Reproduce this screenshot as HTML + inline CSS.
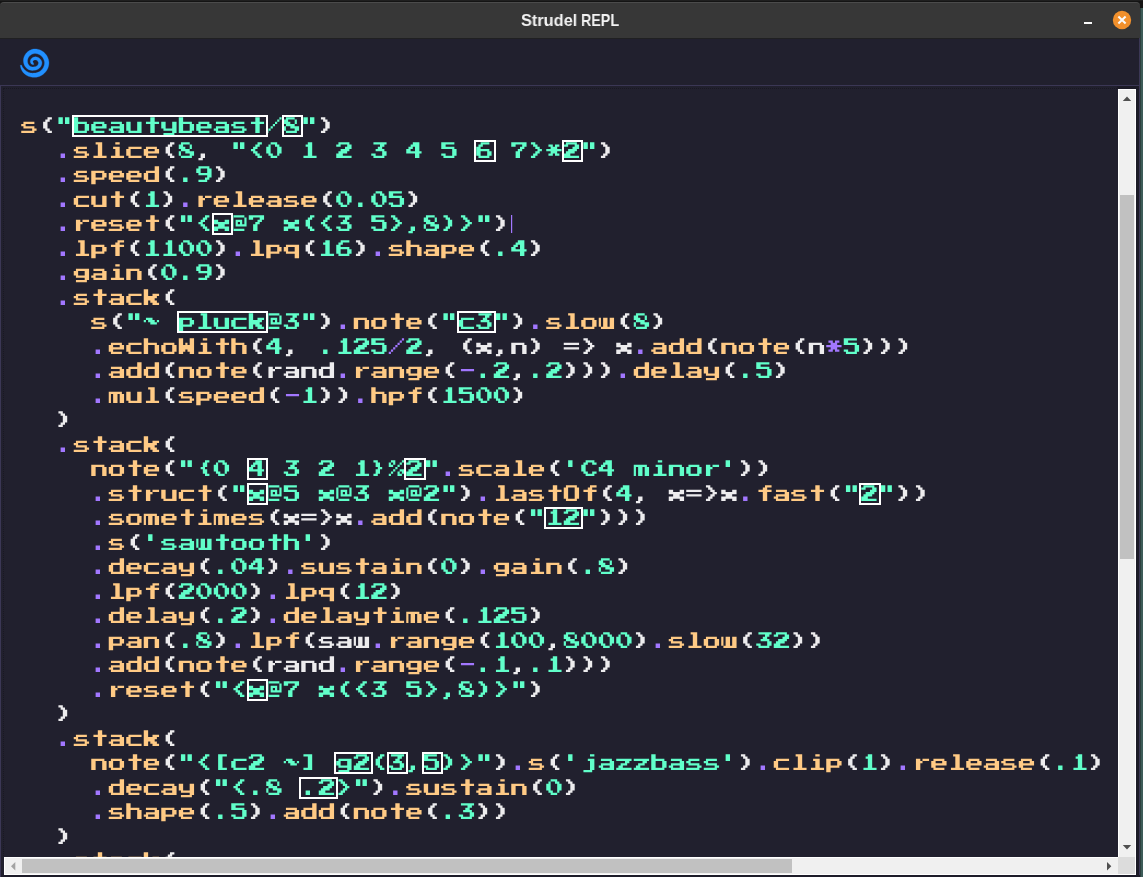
<!DOCTYPE html>
<html><head><meta charset="utf-8">
<style>
html,body{margin:0;padding:0;}
body{width:1143px;height:877px;overflow:hidden;position:relative;background:#141414;}
.abs{position:absolute;}
#desk{left:1140px;top:8px;width:3px;height:869px;background:#3d5c58;border-left:1px solid #2c403d;box-sizing:border-box;}
#title{left:0;top:2px;width:1140px;height:36px;background:#373737;border-radius:4px 4px 0 0;box-sizing:border-box;border-top:1px solid #4b4b4b;}
#top0{left:0;top:0;width:1143px;height:1px;background:#1f1f1f;}
.tt{position:absolute;will-change:transform;top:11px;color:#f2f2f2;font:bold 17px "Liberation Sans",sans-serif;transform-origin:0 0;white-space:nowrap;}
#minb{left:1084px;top:22px;width:8px;height:2px;background:#fafafa;}
#closeb{left:1113px;top:11px;width:18px;height:18px;border-radius:50%;background:#f1902c;}
#header{left:0;top:38px;width:1140px;height:47px;background:#21202e;}
#hline{left:0;top:85px;width:1140px;height:1px;background:#3b3755;}
#editor{left:0;top:86px;width:1140px;height:791px;background:#21202e;}
#lborder{left:0;top:86px;width:1px;height:791px;background:#3b3755;}
#rdark{left:1136px;top:86px;width:3px;height:791px;background:#1c1b27;}
#topdark{left:1117px;top:86px;width:22px;height:3px;background:#1c1b27;}
#focus{left:3px;top:88px;width:1114px;height:768px;box-sizing:border-box;border-top:1px dotted #191822;border-left:1px dotted #191822;}
#rborder{left:1139px;top:38px;width:1px;height:839px;background:#3b3755;}
#bdark{left:1px;top:875px;width:1139px;height:2px;background:#1d1c29;}
#vs{left:1118px;top:89px;width:18px;height:768px;background:#f0f0f0;box-sizing:border-box;border-left:1px solid #fff;border-right:1px solid #fff;border-top:1px solid #fff;}
#vthumb{left:1120px;top:195px;width:14px;height:364px;background:#c1c1c1;}
#hs{left:4px;top:857px;width:1114px;height:18px;background:#f0f0f0;box-sizing:border-box;border-top:1px solid #fff;border-bottom:1px solid #fff;border-left:1px solid #fff;}
#hthumb{left:22px;top:859px;width:770px;height:14px;background:#c1c1c1;}
#corner{left:1118px;top:857px;width:18px;height:18px;background:#dcdcdc;box-sizing:border-box;border-right:1px solid #fff;border-bottom:1px solid #fff;}
#code{left:0;top:0;}
.ln{position:absolute;left:21.25px;white-space:pre;font-family:"Liberation Mono",monospace;font-weight:bold;font-size:23px;line-height:17.5px;height:17.5px;color:#edecee;transform:scaleX(1.268);transform-origin:0 0;}
.f{color:#ffca85}.s{color:#61ffca}.o{color:#a277ff}.w{color:#edecee}
.bxd{box-sizing:border-box;border:2px solid #f4f4f4;}
</style></head><body>
<div class="abs" id="top0"></div>
<div class="abs" id="desk"></div>
<div class="abs" id="title"></div>
<div class="tt" style="left:521.3px;transform:scaleX(0.96)">Strudel</div><div class="tt" style="left:580.5px;transform:scaleX(0.84)">REPL</div>
<div class="abs" id="minb"></div>
<svg class="abs" style="left:0;top:0" width="1143" height="40"><circle cx="1122" cy="20" r="9.2" fill="#f1902c"/><path d="M1118.4 16.6 L1125.6 23.4 M1125.6 16.6 L1118.4 23.4" stroke="#fafafa" stroke-width="2.1" stroke-linecap="butt"/></svg>
<div class="abs" id="header"></div>
<div class="abs" id="hline"></div>
<div class="abs" style="left:0;top:38px;width:1140px;height:1px;background:#202022"></div>
<svg class="abs" style="left:0;top:0" width="80" height="86"><path fill="#2190ff" stroke="#2190ff" stroke-width="0.3" stroke-linejoin="round" d="M20.31 65.29 L20.44 66.27 L20.64 67.25 L20.91 68.21 L21.25 69.16 L21.66 70.09 L22.13 71.00 L22.68 71.87 L23.36 72.69 L24.09 73.42 L24.87 74.09 L25.69 74.71 L26.56 75.27 L27.46 75.76 L28.40 76.20 L29.36 76.56 L30.35 76.86 L31.35 77.09 L32.37 77.24 L33.40 77.33 L34.31 77.35 L35.33 77.30 L36.36 77.18 L37.37 76.99 L38.37 76.73 L39.35 76.40 L40.30 76.01 L41.22 75.54 L42.11 75.02 L42.96 74.43 L43.77 73.78 L44.53 73.08 L45.24 72.33 L45.90 71.53 L46.50 70.69 L47.04 69.80 L47.52 68.88 L47.93 67.93 L48.27 66.95 L48.55 65.95 L48.75 64.93 L48.88 63.90 L48.95 62.86 L48.87 61.66 L48.71 60.63 L48.48 59.62 L48.18 58.64 L47.82 57.68 L47.39 56.75 L46.89 55.86 L46.34 55.01 L45.74 54.21 L45.08 53.45 L44.37 52.74 L43.61 52.08 L42.82 51.49 L41.99 50.95 L41.13 50.47 L40.24 50.06 L39.32 49.71 L38.39 49.43 L37.44 49.21 L36.49 49.07 L35.53 48.99 L34.57 48.97 L33.43 49.08 L32.50 49.29 L31.60 49.58 L30.72 49.92 L29.89 50.32 L29.09 50.77 L28.34 51.28 L27.63 51.83 L26.97 52.43 L26.36 53.06 L25.80 53.73 L25.31 54.43 L24.86 55.15 L24.48 55.90 L24.15 56.67 L23.89 57.44 L23.68 58.23 L23.53 59.01 L23.44 59.80 L23.41 60.58 L23.44 61.36 L23.52 62.11 L23.66 62.86 L23.81 63.52 L24.03 64.22 L24.29 64.89 L24.59 65.54 L24.94 66.15 L25.33 66.73 L25.75 67.28 L26.20 67.78 L26.69 68.25 L27.20 68.67 L27.73 69.05 L28.29 69.38 L28.86 69.67 L29.44 69.92 L30.03 70.12 L30.62 70.27 L31.22 70.37 L31.81 70.43 L32.40 70.45 L32.98 70.42 L33.54 70.36 L34.10 70.25 L34.14 70.20 L34.67 70.19 L35.20 70.14 L35.72 70.06 L36.24 69.94 L36.75 69.78 L37.25 69.58 L37.74 69.35 L38.21 69.09 L38.66 68.80 L39.09 68.47 L39.50 68.11 L39.88 67.73 L40.23 67.32 L40.56 66.88 L40.85 66.42 L41.11 65.94 L41.34 65.45 L41.54 64.94 L41.69 64.41 L41.82 63.88 L41.90 63.33 L41.94 62.78 L41.79 61.81 L41.61 61.28 L41.40 60.77 L41.15 60.29 L40.86 59.83 L40.55 59.40 L40.22 59.00 L39.85 58.63 L39.47 58.29 L39.07 57.99 L38.65 57.72 L38.23 57.49 L37.79 57.29 L37.34 57.13 L36.89 57.00 L36.44 56.91 L35.99 56.86 L35.54 56.84 L35.10 56.85 L34.67 56.90 L34.25 56.98 L33.84 57.09 L33.53 57.19 L33.16 57.33 L32.81 57.50 L32.47 57.69 L32.15 57.90 L31.86 58.14 L31.59 58.39 L31.34 58.66 L31.12 58.94 L30.92 59.23 L30.75 59.53 L30.61 59.84 L30.49 60.15 L30.40 60.47 L30.33 60.79 L30.30 61.11 L30.28 61.42 L30.30 61.73 L30.34 62.03 L30.40 62.32 L30.48 62.60 L30.59 62.87 L30.71 63.12 L30.81 63.29 L30.96 63.51 L31.13 63.71 L31.30 63.89 L31.49 64.05 L31.69 64.20 L31.89 64.32 L32.10 64.42 L32.32 64.51 L32.53 64.57 L32.75 64.61 L32.97 64.63 L33.18 64.62 L33.39 64.60 L33.59 64.56 L33.78 64.50 L33.96 64.43 L33.32 62.71 L33.31 62.69 L33.29 62.68 L33.27 62.66 L33.25 62.64 L33.23 62.61 L33.21 62.59 L33.19 62.56 L33.16 62.53 L33.14 62.49 L33.11 62.46 L33.09 62.41 L33.07 62.37 L33.04 62.31 L33.03 62.26 L33.01 62.20 L33.00 62.14 L32.95 62.00 L32.93 61.93 L32.92 61.85 L32.91 61.77 L32.91 61.69 L32.91 61.59 L32.92 61.50 L32.94 61.40 L32.97 61.30 L33.01 61.19 L33.05 61.08 L33.11 60.98 L33.18 60.87 L33.26 60.76 L33.34 60.66 L33.44 60.56 L33.55 60.47 L33.67 60.38 L33.81 60.29 L33.95 60.22 L34.10 60.15 L34.26 60.10 L34.43 60.05 L34.68 59.98 L34.87 59.94 L35.06 59.92 L35.26 59.91 L35.47 59.92 L35.68 59.94 L35.89 59.98 L36.11 60.04 L36.33 60.12 L36.55 60.21 L36.76 60.32 L36.98 60.46 L37.18 60.61 L37.38 60.78 L37.58 60.96 L37.76 61.17 L37.93 61.39 L38.08 61.64 L38.22 61.89 L38.35 62.16 L38.45 62.45 L38.54 62.75 L38.55 62.63 L38.52 62.95 L38.47 63.25 L38.40 63.56 L38.31 63.86 L38.20 64.15 L38.07 64.43 L37.92 64.70 L37.76 64.95 L37.57 65.20 L37.37 65.43 L37.16 65.64 L36.93 65.84 L36.69 66.03 L36.44 66.19 L36.17 66.34 L35.90 66.46 L35.62 66.57 L35.34 66.66 L35.05 66.72 L34.76 66.77 L34.46 66.80 L34.17 66.80 L33.38 66.90 L33.07 66.94 L32.76 66.96 L32.43 66.95 L32.11 66.92 L31.77 66.86 L31.44 66.78 L31.11 66.68 L30.78 66.54 L30.45 66.38 L30.14 66.19 L29.83 65.98 L29.53 65.74 L29.24 65.48 L28.97 65.18 L28.72 64.87 L28.48 64.53 L28.27 64.17 L28.08 63.80 L27.92 63.40 L27.78 62.98 L27.67 62.55 L27.58 62.05 L27.52 61.59 L27.49 61.13 L27.50 60.65 L27.54 60.17 L27.62 59.68 L27.73 59.19 L27.88 58.71 L28.07 58.23 L28.30 57.75 L28.56 57.29 L28.86 56.84 L29.20 56.41 L29.57 56.00 L29.98 55.60 L30.42 55.24 L30.89 54.90 L31.40 54.59 L31.92 54.32 L32.48 54.08 L33.06 53.87 L33.66 53.71 L34.27 53.59 L34.71 53.56 L35.35 53.57 L35.99 53.61 L36.63 53.71 L37.26 53.84 L37.89 54.03 L38.51 54.26 L39.11 54.53 L39.70 54.85 L40.27 55.21 L40.81 55.61 L41.33 56.05 L41.82 56.53 L42.28 57.05 L42.70 57.60 L43.09 58.19 L43.43 58.80 L43.74 59.44 L44.00 60.11 L44.22 60.79 L44.38 61.50 L44.50 62.22 L44.55 62.78 L44.51 63.51 L44.42 64.24 L44.27 64.96 L44.08 65.67 L43.84 66.36 L43.55 67.03 L43.22 67.68 L42.84 68.31 L42.42 68.91 L41.96 69.47 L41.46 70.01 L40.92 70.50 L40.35 70.96 L39.75 71.38 L39.13 71.75 L38.47 72.08 L37.80 72.37 L37.11 72.60 L36.40 72.79 L35.69 72.93 L34.96 73.01 L34.23 73.05 L33.38 73.11 L32.64 73.13 L31.89 73.11 L31.14 73.03 L30.39 72.90 L29.64 72.71 L28.91 72.47 L28.18 72.17 L27.47 71.82 L26.79 71.42 L26.12 70.97 L25.49 70.47 L24.90 69.95 L24.28 69.38 L23.71 68.77 L23.17 68.10 L22.67 67.39 L22.22 66.64 L21.83 65.85 L21.48 65.02Z"/></svg>
<div class="abs" id="editor"></div>
<div class="abs" id="lborder"></div>
<div class="abs" id="rdark"></div>
<div class="abs" id="topdark"></div>
<div class="abs" id="focus"></div>
<div class="abs" id="rborder"></div>
<div class="abs" id="bdark"></div>
<div class="abs" id="clip" style="left:1px;top:86px;width:1117px;height:771px;overflow:hidden;"><div class="abs" style="left:-1px;top:-86px;width:1143px;height:877px;"><svg class="abs" id="codesvg" width="1143" height="877" viewBox="0 0 1143 877"><defs><path id="g34" transform="scale(2.1875 2.25)" d="M1 0h2v1h-2zM4 0h2v1h-2zM1 1h2v1h-2zM4 1h2v1h-2zM1 2h2v1h-2zM4 2h2v1h-2z"/><path id="g37" transform="scale(2.1875 2.25)" d="M1 0h2v1h-2zM6 0h1v1h-1zM0 1h1v1h-1zM2 1h1v1h-1zM5 1h1v1h-1zM0 2h2v1h-2zM4 2h1v1h-1zM3 3h1v1h-1zM2 4h1v1h-1zM5 4h2v1h-2zM1 5h1v1h-1zM4 5h1v1h-1zM6 5h1v1h-1zM0 6h1v1h-1zM4 6h2v1h-2z"/><path id="g39" transform="scale(2.1875 2.25)" d="M2 0h2v1h-2zM2 1h2v1h-2zM2 2h2v1h-2z"/><path id="g40" transform="scale(2.1875 2.25)" d="M4 0h2v1h-2zM3 1h2v1h-2zM2 2h2v1h-2zM2 3h2v1h-2zM2 4h2v1h-2zM3 5h2v1h-2zM4 6h2v1h-2z"/><path id="g41" transform="scale(2.1875 2.25)" d="M1 0h2v1h-2zM2 1h2v1h-2zM3 2h2v1h-2zM3 3h2v1h-2zM3 4h2v1h-2zM2 5h2v1h-2zM1 6h2v1h-2z"/><path id="g42" transform="scale(2.1875 2.25)" d="M1 1h2v1h-2zM4 1h2v1h-2zM2 2h3v1h-3zM0 3h7v1h-7zM2 4h3v1h-3zM1 5h2v1h-2zM4 5h2v1h-2z"/><path id="g44" transform="scale(2.1875 2.25)" d="M2 5h2v1h-2zM2 6h2v1h-2zM1 7h2v1h-2z"/><path id="g45" transform="scale(2.1875 2.25)" d="M1 3h6v1h-6z"/><path id="g46" transform="scale(2.1875 2.25)" d="M2 5h2v1h-2zM2 6h2v1h-2z"/><path id="g47" transform="scale(2.1875 2.25)" d="M6 0h1v1h-1zM5 1h1v1h-1zM4 2h1v1h-1zM3 3h1v1h-1zM2 4h1v1h-1zM1 5h1v1h-1zM0 6h1v1h-1z"/><path id="g48" transform="scale(2.1875 2.25)" d="M2 0h3v1h-3zM1 1h1v1h-1zM4 1h2v1h-2zM0 2h2v1h-2zM5 2h2v1h-2zM0 3h2v1h-2zM5 3h2v1h-2zM0 4h2v1h-2zM5 4h2v1h-2zM1 5h2v1h-2zM5 5h1v1h-1zM2 6h3v1h-3z"/><path id="g49" transform="scale(2.1875 2.25)" d="M3 0h2v1h-2zM2 1h3v1h-3zM3 2h2v1h-2zM3 3h2v1h-2zM3 4h2v1h-2zM3 5h2v1h-2zM1 6h6v1h-6z"/><path id="g50" transform="scale(2.1875 2.25)" d="M1 0h5v1h-5zM0 1h2v1h-2zM5 1h2v1h-2zM4 2h3v1h-3zM2 3h4v1h-4zM1 4h4v1h-4zM0 5h3v1h-3zM0 6h7v1h-7z"/><path id="g51" transform="scale(2.1875 2.25)" d="M1 0h6v1h-6zM4 1h2v1h-2zM3 2h2v1h-2zM2 3h4v1h-4zM5 4h2v1h-2zM0 5h2v1h-2zM5 5h2v1h-2zM1 6h5v1h-5z"/><path id="g52" transform="scale(2.1875 2.25)" d="M3 0h3v1h-3zM2 1h4v1h-4zM1 2h2v1h-2zM4 2h2v1h-2zM0 3h2v1h-2zM4 3h2v1h-2zM0 4h7v1h-7zM4 5h2v1h-2zM4 6h2v1h-2z"/><path id="g53" transform="scale(2.1875 2.25)" d="M0 0h6v1h-6zM0 1h2v1h-2zM0 2h6v1h-6zM5 3h2v1h-2zM5 4h2v1h-2zM0 5h2v1h-2zM5 5h2v1h-2zM1 6h5v1h-5z"/><path id="g54" transform="scale(2.1875 2.25)" d="M2 0h4v1h-4zM1 1h2v1h-2zM0 2h2v1h-2zM0 3h6v1h-6zM0 4h2v1h-2zM5 4h2v1h-2zM0 5h2v1h-2zM5 5h2v1h-2zM1 6h5v1h-5z"/><path id="g55" transform="scale(2.1875 2.25)" d="M0 0h7v1h-7zM0 1h2v1h-2zM5 1h2v1h-2zM4 2h2v1h-2zM3 3h2v1h-2zM2 4h2v1h-2zM2 5h2v1h-2zM2 6h2v1h-2z"/><path id="g56" transform="scale(2.1875 2.25)" d="M1 0h4v1h-4zM0 1h2v1h-2zM5 1h1v1h-1zM0 2h3v1h-3zM5 2h1v1h-1zM1 3h4v1h-4zM0 4h1v1h-1zM3 4h4v1h-4zM0 5h1v1h-1zM5 5h2v1h-2zM1 6h5v1h-5z"/><path id="g57" transform="scale(2.1875 2.25)" d="M1 0h5v1h-5zM0 1h2v1h-2zM5 1h2v1h-2zM0 2h2v1h-2zM5 2h2v1h-2zM1 3h6v1h-6zM5 4h2v1h-2zM4 5h2v1h-2zM1 6h4v1h-4z"/><path id="g60" transform="scale(2.1875 2.25)" d="M4 0h2v1h-2zM3 1h2v1h-2zM2 2h2v1h-2zM1 3h2v1h-2zM2 4h2v1h-2zM3 5h2v1h-2zM4 6h2v1h-2z"/><path id="g61" transform="scale(2.1875 2.25)" d="M0 2h7v1h-7zM0 4h7v1h-7z"/><path id="g62" transform="scale(2.1875 2.25)" d="M1 0h2v1h-2zM2 1h2v1h-2zM3 2h2v1h-2zM4 3h2v1h-2zM3 4h2v1h-2zM2 5h2v1h-2zM1 6h2v1h-2z"/><path id="g64" transform="scale(2.1875 2.25)" d="M1 0h5v1h-5zM0 1h1v1h-1zM6 1h1v1h-1zM0 2h1v1h-1zM2 2h3v1h-3zM6 2h1v1h-1zM0 3h1v1h-1zM2 3h1v1h-1zM4 3h1v1h-1zM6 3h1v1h-1zM0 4h1v1h-1zM2 4h5v1h-5zM0 5h1v1h-1zM1 6h5v1h-5z"/><path id="g67" transform="scale(2.1875 2.25)" d="M2 0h4v1h-4zM1 1h2v1h-2zM5 1h2v1h-2zM0 2h2v1h-2zM0 3h2v1h-2zM0 4h2v1h-2zM1 5h2v1h-2zM5 5h2v1h-2zM2 6h4v1h-4z"/><path id="g79" transform="scale(2.1875 2.25)" d="M1 0h5v1h-5zM0 1h2v1h-2zM5 1h2v1h-2zM0 2h2v1h-2zM5 2h2v1h-2zM0 3h2v1h-2zM5 3h2v1h-2zM0 4h2v1h-2zM5 4h2v1h-2zM0 5h2v1h-2zM5 5h2v1h-2zM1 6h5v1h-5z"/><path id="g87" transform="scale(2.1875 2.25)" d="M0 0h2v1h-2zM5 0h2v1h-2zM0 1h2v1h-2zM5 1h2v1h-2zM0 2h2v1h-2zM3 2h1v1h-1zM5 2h2v1h-2zM0 3h7v1h-7zM0 4h7v1h-7zM0 5h3v1h-3zM4 5h3v1h-3zM0 6h2v1h-2zM5 6h2v1h-2z"/><path id="g91" transform="scale(2.1875 2.25)" d="M2 0h4v1h-4zM2 1h2v1h-2zM2 2h2v1h-2zM2 3h2v1h-2zM2 4h2v1h-2zM2 5h2v1h-2zM2 6h4v1h-4z"/><path id="g93" transform="scale(2.1875 2.25)" d="M1 0h4v1h-4zM3 1h2v1h-2zM3 2h2v1h-2zM3 3h2v1h-2zM3 4h2v1h-2zM3 5h2v1h-2zM1 6h4v1h-4z"/><path id="g97" transform="scale(2.1875 2.25)" d="M1 2h5v1h-5zM5 3h2v1h-2zM1 4h6v1h-6zM0 5h2v1h-2zM5 5h2v1h-2zM1 6h6v1h-6z"/><path id="g98" transform="scale(2.1875 2.25)" d="M0 0h2v1h-2zM0 1h2v1h-2zM0 2h6v1h-6zM0 3h2v1h-2zM5 3h2v1h-2zM0 4h2v1h-2zM5 4h2v1h-2zM0 5h2v1h-2zM5 5h2v1h-2zM0 6h6v1h-6z"/><path id="g99" transform="scale(2.1875 2.25)" d="M1 2h6v1h-6zM0 3h2v1h-2zM0 4h2v1h-2zM0 5h2v1h-2zM1 6h6v1h-6z"/><path id="g100" transform="scale(2.1875 2.25)" d="M5 0h2v1h-2zM5 1h2v1h-2zM1 2h6v1h-6zM0 3h2v1h-2zM5 3h2v1h-2zM0 4h2v1h-2zM5 4h2v1h-2zM0 5h2v1h-2zM5 5h2v1h-2zM1 6h6v1h-6z"/><path id="g101" transform="scale(2.1875 2.25)" d="M1 2h5v1h-5zM0 3h2v1h-2zM5 3h2v1h-2zM0 4h7v1h-7zM0 5h2v1h-2zM1 6h5v1h-5z"/><path id="g102" transform="scale(2.1875 2.25)" d="M4 0h3v1h-3zM3 1h2v1h-2zM1 2h6v1h-6zM3 3h2v1h-2zM3 4h2v1h-2zM3 5h2v1h-2zM3 6h2v1h-2z"/><path id="g103" transform="scale(2.1875 2.25)" d="M1 2h6v1h-6zM0 3h2v1h-2zM5 3h2v1h-2zM0 4h2v1h-2zM5 4h2v1h-2zM1 5h6v1h-6zM5 6h2v1h-2zM1 7h5v1h-5z"/><path id="g104" transform="scale(2.1875 2.25)" d="M0 0h2v1h-2zM0 1h2v1h-2zM0 2h6v1h-6zM0 3h2v1h-2zM5 3h2v1h-2zM0 4h2v1h-2zM5 4h2v1h-2zM0 5h2v1h-2zM5 5h2v1h-2zM0 6h2v1h-2zM5 6h2v1h-2z"/><path id="g105" transform="scale(2.1875 2.25)" d="M3 0h2v1h-2zM2 2h3v1h-3zM3 3h2v1h-2zM3 4h2v1h-2zM3 5h2v1h-2zM1 6h6v1h-6z"/><path id="g106" transform="scale(2.1875 2.25)" d="M4 0h2v1h-2zM3 2h3v1h-3zM4 3h2v1h-2zM4 4h2v1h-2zM4 5h2v1h-2zM4 6h2v1h-2zM1 7h4v1h-4z"/><path id="g107" transform="scale(2.1875 2.25)" d="M0 0h2v1h-2zM0 1h2v1h-2zM0 2h2v1h-2zM4 2h3v1h-3zM0 3h6v1h-6zM0 4h5v1h-5zM0 5h2v1h-2zM3 5h3v1h-3zM0 6h2v1h-2zM4 6h3v1h-3z"/><path id="g108" transform="scale(2.1875 2.25)" d="M2 0h3v1h-3zM3 1h2v1h-2zM3 2h2v1h-2zM3 3h2v1h-2zM3 4h2v1h-2zM3 5h2v1h-2zM1 6h6v1h-6z"/><path id="g109" transform="scale(2.1875 2.25)" d="M0 2h6v1h-6zM0 3h1v1h-1zM2 3h2v1h-2zM5 3h2v1h-2zM0 4h1v1h-1zM2 4h2v1h-2zM5 4h2v1h-2zM0 5h1v1h-1zM2 5h2v1h-2zM5 5h2v1h-2zM0 6h1v1h-1zM2 6h2v1h-2zM5 6h2v1h-2z"/><path id="g110" transform="scale(2.1875 2.25)" d="M0 2h6v1h-6zM0 3h2v1h-2zM5 3h2v1h-2zM0 4h2v1h-2zM5 4h2v1h-2zM0 5h2v1h-2zM5 5h2v1h-2zM0 6h2v1h-2zM5 6h2v1h-2z"/><path id="g111" transform="scale(2.1875 2.25)" d="M1 2h5v1h-5zM0 3h2v1h-2zM5 3h2v1h-2zM0 4h2v1h-2zM5 4h2v1h-2zM0 5h2v1h-2zM5 5h2v1h-2zM1 6h5v1h-5z"/><path id="g112" transform="scale(2.1875 2.25)" d="M0 2h6v1h-6zM0 3h2v1h-2zM5 3h2v1h-2zM0 4h2v1h-2zM5 4h2v1h-2zM0 5h6v1h-6zM0 6h2v1h-2zM0 7h2v1h-2z"/><path id="g113" transform="scale(2.1875 2.25)" d="M1 2h6v1h-6zM0 3h2v1h-2zM5 3h2v1h-2zM0 4h2v1h-2zM5 4h2v1h-2zM1 5h6v1h-6zM5 6h2v1h-2zM5 7h2v1h-2z"/><path id="g114" transform="scale(2.1875 2.25)" d="M1 2h2v1h-2zM4 2h3v1h-3zM1 3h3v1h-3zM1 4h2v1h-2zM1 5h2v1h-2zM1 6h2v1h-2z"/><path id="g115" transform="scale(2.1875 2.25)" d="M1 2h5v1h-5zM0 3h2v1h-2zM1 4h5v1h-5zM5 5h2v1h-2zM0 6h6v1h-6z"/><path id="g116" transform="scale(2.1875 2.25)" d="M3 0h2v1h-2zM3 1h2v1h-2zM1 2h6v1h-6zM3 3h2v1h-2zM3 4h2v1h-2zM3 5h2v1h-2zM3 6h2v1h-2z"/><path id="g117" transform="scale(2.1875 2.25)" d="M0 2h2v1h-2zM5 2h2v1h-2zM0 3h2v1h-2zM5 3h2v1h-2zM0 4h2v1h-2zM5 4h2v1h-2zM0 5h2v1h-2zM5 5h2v1h-2zM1 6h6v1h-6z"/><path id="g119" transform="scale(2.1875 2.25)" d="M0 2h1v1h-1zM2 2h2v1h-2zM5 2h2v1h-2zM0 3h1v1h-1zM2 3h2v1h-2zM5 3h2v1h-2zM0 4h1v1h-1zM2 4h2v1h-2zM5 4h2v1h-2zM0 5h1v1h-1zM2 5h2v1h-2zM5 5h2v1h-2zM1 6h6v1h-6z"/><path id="g120" transform="scale(2.1875 2.25)" d="M0 2h2v1h-2zM5 2h2v1h-2zM0 3h7v1h-7zM2 4h3v1h-3zM0 5h7v1h-7zM0 6h2v1h-2zM5 6h2v1h-2z"/><path id="g121" transform="scale(2.1875 2.25)" d="M0 2h2v1h-2zM5 2h2v1h-2zM0 3h2v1h-2zM5 3h2v1h-2zM0 4h2v1h-2zM5 4h2v1h-2zM1 5h6v1h-6zM5 6h2v1h-2zM1 7h5v1h-5z"/><path id="g122" transform="scale(2.1875 2.25)" d="M0 2h7v1h-7zM4 3h2v1h-2zM2 4h3v1h-3zM1 5h2v1h-2zM0 6h7v1h-7z"/><path id="g123" transform="scale(2.1875 2.25)" d="M4 0h2v1h-2zM3 1h2v1h-2zM3 2h2v1h-2zM2 3h2v1h-2zM3 4h2v1h-2zM3 5h2v1h-2zM4 6h2v1h-2z"/><path id="g125" transform="scale(2.1875 2.25)" d="M1 0h2v1h-2zM2 1h2v1h-2zM2 2h2v1h-2zM3 3h2v1h-2zM2 4h2v1h-2zM2 5h2v1h-2zM1 6h2v1h-2z"/><path id="g126" transform="scale(2.1875 2.25)" d="M1 2h3v1h-3zM0 3h1v1h-1zM2 3h3v1h-3zM6 3h1v1h-1zM3 4h3v1h-3z"/></defs><g fill="#ffca85"><use href="#g115" x="21.25" y="117.250"/></g>
<g fill="#edecee"><use href="#g40" x="38.75" y="117.250"/></g>
<g fill="#61ffca"><use href="#g34" x="56.25" y="117.250"/><use href="#g98" x="73.75" y="117.250"/><use href="#g101" x="91.25" y="117.250"/><use href="#g97" x="108.75" y="117.250"/><use href="#g117" x="126.25" y="117.250"/><use href="#g116" x="143.75" y="117.250"/><use href="#g121" x="161.25" y="117.250"/><use href="#g98" x="178.75" y="117.250"/><use href="#g101" x="196.25" y="117.250"/><use href="#g97" x="213.75" y="117.250"/><use href="#g115" x="231.25" y="117.250"/><use href="#g116" x="248.75" y="117.250"/><use href="#g47" x="266.25" y="117.250"/><use href="#g56" x="283.75" y="117.250"/><use href="#g34" x="301.25" y="117.250"/></g>
<g fill="#edecee"><use href="#g41" x="318.75" y="117.250"/></g>
<g fill="#a277ff"><use href="#g46" x="56.25" y="142.250"/></g>
<g fill="#ffca85"><use href="#g115" x="73.75" y="142.250"/><use href="#g108" x="91.25" y="142.250"/><use href="#g105" x="108.75" y="142.250"/><use href="#g99" x="126.25" y="142.250"/><use href="#g101" x="143.75" y="142.250"/></g>
<g fill="#edecee"><use href="#g40" x="161.25" y="142.250"/></g>
<g fill="#61ffca"><use href="#g56" x="178.75" y="142.250"/></g>
<g fill="#edecee"><use href="#g44" x="196.25" y="142.250"/></g>
<g fill="#61ffca"><use href="#g34" x="231.25" y="142.250"/><use href="#g60" x="248.75" y="142.250"/><use href="#g48" x="266.25" y="142.250"/><use href="#g49" x="301.25" y="142.250"/><use href="#g50" x="336.25" y="142.250"/><use href="#g51" x="371.25" y="142.250"/><use href="#g52" x="406.25" y="142.250"/><use href="#g53" x="441.25" y="142.250"/><use href="#g54" x="476.25" y="142.250"/><use href="#g55" x="511.25" y="142.250"/><use href="#g62" x="528.75" y="142.250"/><use href="#g42" x="546.25" y="142.250"/><use href="#g50" x="563.75" y="142.250"/><use href="#g34" x="581.25" y="142.250"/></g>
<g fill="#edecee"><use href="#g41" x="598.75" y="142.250"/></g>
<g fill="#a277ff"><use href="#g46" x="56.25" y="166.250"/></g>
<g fill="#ffca85"><use href="#g115" x="73.75" y="166.250"/><use href="#g112" x="91.25" y="166.250"/><use href="#g101" x="108.75" y="166.250"/><use href="#g101" x="126.25" y="166.250"/><use href="#g100" x="143.75" y="166.250"/></g>
<g fill="#edecee"><use href="#g40" x="161.25" y="166.250"/></g>
<g fill="#61ffca"><use href="#g46" x="178.75" y="166.250"/><use href="#g57" x="196.25" y="166.250"/></g>
<g fill="#edecee"><use href="#g41" x="213.75" y="166.250"/></g>
<g fill="#a277ff"><use href="#g46" x="56.25" y="191.250"/></g>
<g fill="#ffca85"><use href="#g99" x="73.75" y="191.250"/><use href="#g117" x="91.25" y="191.250"/><use href="#g116" x="108.75" y="191.250"/></g>
<g fill="#edecee"><use href="#g40" x="126.25" y="191.250"/></g>
<g fill="#61ffca"><use href="#g49" x="143.75" y="191.250"/></g>
<g fill="#edecee"><use href="#g41" x="161.25" y="191.250"/></g>
<g fill="#a277ff"><use href="#g46" x="178.75" y="191.250"/></g>
<g fill="#ffca85"><use href="#g114" x="196.25" y="191.250"/><use href="#g101" x="213.75" y="191.250"/><use href="#g108" x="231.25" y="191.250"/><use href="#g101" x="248.75" y="191.250"/><use href="#g97" x="266.25" y="191.250"/><use href="#g115" x="283.75" y="191.250"/><use href="#g101" x="301.25" y="191.250"/></g>
<g fill="#edecee"><use href="#g40" x="318.75" y="191.250"/></g>
<g fill="#61ffca"><use href="#g48" x="336.25" y="191.250"/><use href="#g46" x="353.75" y="191.250"/><use href="#g48" x="371.25" y="191.250"/><use href="#g53" x="388.75" y="191.250"/></g>
<g fill="#edecee"><use href="#g41" x="406.25" y="191.250"/></g>
<g fill="#a277ff"><use href="#g46" x="56.25" y="215.250"/></g>
<g fill="#ffca85"><use href="#g114" x="73.75" y="215.250"/><use href="#g101" x="91.25" y="215.250"/><use href="#g115" x="108.75" y="215.250"/><use href="#g101" x="126.25" y="215.250"/><use href="#g116" x="143.75" y="215.250"/></g>
<g fill="#edecee"><use href="#g40" x="161.25" y="215.250"/></g>
<g fill="#61ffca"><use href="#g34" x="178.75" y="215.250"/><use href="#g60" x="196.25" y="215.250"/><use href="#g120" x="213.75" y="215.250"/><use href="#g64" x="231.25" y="215.250"/><use href="#g55" x="248.75" y="215.250"/><use href="#g120" x="283.75" y="215.250"/><use href="#g40" x="301.25" y="215.250"/><use href="#g60" x="318.75" y="215.250"/><use href="#g51" x="336.25" y="215.250"/><use href="#g53" x="371.25" y="215.250"/><use href="#g62" x="388.75" y="215.250"/><use href="#g44" x="406.25" y="215.250"/><use href="#g56" x="423.75" y="215.250"/><use href="#g41" x="441.25" y="215.250"/><use href="#g62" x="458.75" y="215.250"/><use href="#g34" x="476.25" y="215.250"/></g>
<g fill="#edecee"><use href="#g41" x="493.75" y="215.250"/></g>
<g fill="#a277ff"><use href="#g46" x="56.25" y="240.250"/></g>
<g fill="#ffca85"><use href="#g108" x="73.75" y="240.250"/><use href="#g112" x="91.25" y="240.250"/><use href="#g102" x="108.75" y="240.250"/></g>
<g fill="#edecee"><use href="#g40" x="126.25" y="240.250"/></g>
<g fill="#61ffca"><use href="#g49" x="143.75" y="240.250"/><use href="#g49" x="161.25" y="240.250"/><use href="#g48" x="178.75" y="240.250"/><use href="#g48" x="196.25" y="240.250"/></g>
<g fill="#edecee"><use href="#g41" x="213.75" y="240.250"/></g>
<g fill="#a277ff"><use href="#g46" x="231.25" y="240.250"/></g>
<g fill="#ffca85"><use href="#g108" x="248.75" y="240.250"/><use href="#g112" x="266.25" y="240.250"/><use href="#g113" x="283.75" y="240.250"/></g>
<g fill="#edecee"><use href="#g40" x="301.25" y="240.250"/></g>
<g fill="#61ffca"><use href="#g49" x="318.75" y="240.250"/><use href="#g54" x="336.25" y="240.250"/></g>
<g fill="#edecee"><use href="#g41" x="353.75" y="240.250"/></g>
<g fill="#a277ff"><use href="#g46" x="371.25" y="240.250"/></g>
<g fill="#ffca85"><use href="#g115" x="388.75" y="240.250"/><use href="#g104" x="406.25" y="240.250"/><use href="#g97" x="423.75" y="240.250"/><use href="#g112" x="441.25" y="240.250"/><use href="#g101" x="458.75" y="240.250"/></g>
<g fill="#edecee"><use href="#g40" x="476.25" y="240.250"/></g>
<g fill="#61ffca"><use href="#g46" x="493.75" y="240.250"/><use href="#g52" x="511.25" y="240.250"/></g>
<g fill="#edecee"><use href="#g41" x="528.75" y="240.250"/></g>
<g fill="#a277ff"><use href="#g46" x="56.25" y="264.250"/></g>
<g fill="#ffca85"><use href="#g103" x="73.75" y="264.250"/><use href="#g97" x="91.25" y="264.250"/><use href="#g105" x="108.75" y="264.250"/><use href="#g110" x="126.25" y="264.250"/></g>
<g fill="#edecee"><use href="#g40" x="143.75" y="264.250"/></g>
<g fill="#61ffca"><use href="#g48" x="161.25" y="264.250"/><use href="#g46" x="178.75" y="264.250"/><use href="#g57" x="196.25" y="264.250"/></g>
<g fill="#edecee"><use href="#g41" x="213.75" y="264.250"/></g>
<g fill="#a277ff"><use href="#g46" x="56.25" y="289.250"/></g>
<g fill="#ffca85"><use href="#g115" x="73.75" y="289.250"/><use href="#g116" x="91.25" y="289.250"/><use href="#g97" x="108.75" y="289.250"/><use href="#g99" x="126.25" y="289.250"/><use href="#g107" x="143.75" y="289.250"/></g>
<g fill="#edecee"><use href="#g40" x="161.25" y="289.250"/></g>
<g fill="#ffca85"><use href="#g115" x="91.25" y="313.250"/></g>
<g fill="#edecee"><use href="#g40" x="108.75" y="313.250"/></g>
<g fill="#61ffca"><use href="#g34" x="126.25" y="313.250"/><use href="#g126" x="143.75" y="313.250"/><use href="#g112" x="178.75" y="313.250"/><use href="#g108" x="196.25" y="313.250"/><use href="#g117" x="213.75" y="313.250"/><use href="#g99" x="231.25" y="313.250"/><use href="#g107" x="248.75" y="313.250"/><use href="#g64" x="266.25" y="313.250"/><use href="#g51" x="283.75" y="313.250"/><use href="#g34" x="301.25" y="313.250"/></g>
<g fill="#edecee"><use href="#g41" x="318.75" y="313.250"/></g>
<g fill="#a277ff"><use href="#g46" x="336.25" y="313.250"/></g>
<g fill="#ffca85"><use href="#g110" x="353.75" y="313.250"/><use href="#g111" x="371.25" y="313.250"/><use href="#g116" x="388.75" y="313.250"/><use href="#g101" x="406.25" y="313.250"/></g>
<g fill="#edecee"><use href="#g40" x="423.75" y="313.250"/></g>
<g fill="#61ffca"><use href="#g34" x="441.25" y="313.250"/><use href="#g99" x="458.75" y="313.250"/><use href="#g51" x="476.25" y="313.250"/><use href="#g34" x="493.75" y="313.250"/></g>
<g fill="#edecee"><use href="#g41" x="511.25" y="313.250"/></g>
<g fill="#a277ff"><use href="#g46" x="528.75" y="313.250"/></g>
<g fill="#ffca85"><use href="#g115" x="546.25" y="313.250"/><use href="#g108" x="563.75" y="313.250"/><use href="#g111" x="581.25" y="313.250"/><use href="#g119" x="598.75" y="313.250"/></g>
<g fill="#edecee"><use href="#g40" x="616.25" y="313.250"/></g>
<g fill="#61ffca"><use href="#g56" x="633.75" y="313.250"/></g>
<g fill="#edecee"><use href="#g41" x="651.25" y="313.250"/></g>
<g fill="#a277ff"><use href="#g46" x="91.25" y="338.250"/></g>
<g fill="#ffca85"><use href="#g101" x="108.75" y="338.250"/><use href="#g99" x="126.25" y="338.250"/><use href="#g104" x="143.75" y="338.250"/><use href="#g111" x="161.25" y="338.250"/><use href="#g87" x="178.75" y="338.250"/><use href="#g105" x="196.25" y="338.250"/><use href="#g116" x="213.75" y="338.250"/><use href="#g104" x="231.25" y="338.250"/></g>
<g fill="#edecee"><use href="#g40" x="248.75" y="338.250"/></g>
<g fill="#61ffca"><use href="#g52" x="266.25" y="338.250"/></g>
<g fill="#edecee"><use href="#g44" x="283.75" y="338.250"/></g>
<g fill="#61ffca"><use href="#g46" x="318.75" y="338.250"/><use href="#g49" x="336.25" y="338.250"/><use href="#g50" x="353.75" y="338.250"/><use href="#g53" x="371.25" y="338.250"/></g>
<g fill="#a277ff"><use href="#g47" x="388.75" y="338.250"/></g>
<g fill="#61ffca"><use href="#g50" x="406.25" y="338.250"/></g>
<g fill="#edecee"><use href="#g44" x="423.75" y="338.250"/></g>
<g fill="#edecee"><use href="#g40" x="458.75" y="338.250"/></g>
<g fill="#edecee"><use href="#g120" x="476.25" y="338.250"/></g>
<g fill="#edecee"><use href="#g44" x="493.75" y="338.250"/></g>
<g fill="#edecee"><use href="#g110" x="511.25" y="338.250"/></g>
<g fill="#edecee"><use href="#g41" x="528.75" y="338.250"/></g>
<g fill="#edecee"><use href="#g61" x="563.75" y="338.250"/></g>
<g fill="#edecee"><use href="#g62" x="581.25" y="338.250"/></g>
<g fill="#edecee"><use href="#g120" x="616.25" y="338.250"/></g>
<g fill="#a277ff"><use href="#g46" x="633.75" y="338.250"/></g>
<g fill="#ffca85"><use href="#g97" x="651.25" y="338.250"/><use href="#g100" x="668.75" y="338.250"/><use href="#g100" x="686.25" y="338.250"/></g>
<g fill="#edecee"><use href="#g40" x="703.75" y="338.250"/></g>
<g fill="#ffca85"><use href="#g110" x="721.25" y="338.250"/><use href="#g111" x="738.75" y="338.250"/><use href="#g116" x="756.25" y="338.250"/><use href="#g101" x="773.75" y="338.250"/></g>
<g fill="#edecee"><use href="#g40" x="791.25" y="338.250"/></g>
<g fill="#edecee"><use href="#g110" x="808.75" y="338.250"/></g>
<g fill="#a277ff"><use href="#g42" x="826.25" y="338.250"/></g>
<g fill="#61ffca"><use href="#g53" x="843.75" y="338.250"/></g>
<g fill="#edecee"><use href="#g41" x="861.25" y="338.250"/></g>
<g fill="#edecee"><use href="#g41" x="878.75" y="338.250"/></g>
<g fill="#edecee"><use href="#g41" x="896.25" y="338.250"/></g>
<g fill="#a277ff"><use href="#g46" x="91.25" y="362.250"/></g>
<g fill="#ffca85"><use href="#g97" x="108.75" y="362.250"/><use href="#g100" x="126.25" y="362.250"/><use href="#g100" x="143.75" y="362.250"/></g>
<g fill="#edecee"><use href="#g40" x="161.25" y="362.250"/></g>
<g fill="#ffca85"><use href="#g110" x="178.75" y="362.250"/><use href="#g111" x="196.25" y="362.250"/><use href="#g116" x="213.75" y="362.250"/><use href="#g101" x="231.25" y="362.250"/></g>
<g fill="#edecee"><use href="#g40" x="248.75" y="362.250"/></g>
<g fill="#edecee"><use href="#g114" x="266.25" y="362.250"/><use href="#g97" x="283.75" y="362.250"/><use href="#g110" x="301.25" y="362.250"/><use href="#g100" x="318.75" y="362.250"/></g>
<g fill="#a277ff"><use href="#g46" x="336.25" y="362.250"/></g>
<g fill="#ffca85"><use href="#g114" x="353.75" y="362.250"/><use href="#g97" x="371.25" y="362.250"/><use href="#g110" x="388.75" y="362.250"/><use href="#g103" x="406.25" y="362.250"/><use href="#g101" x="423.75" y="362.250"/></g>
<g fill="#edecee"><use href="#g40" x="441.25" y="362.250"/></g>
<g fill="#a277ff"><use href="#g45" x="458.75" y="362.250"/></g>
<g fill="#61ffca"><use href="#g46" x="476.25" y="362.250"/><use href="#g50" x="493.75" y="362.250"/></g>
<g fill="#edecee"><use href="#g44" x="511.25" y="362.250"/></g>
<g fill="#61ffca"><use href="#g46" x="528.75" y="362.250"/><use href="#g50" x="546.25" y="362.250"/></g>
<g fill="#edecee"><use href="#g41" x="563.75" y="362.250"/></g>
<g fill="#edecee"><use href="#g41" x="581.25" y="362.250"/></g>
<g fill="#edecee"><use href="#g41" x="598.75" y="362.250"/></g>
<g fill="#a277ff"><use href="#g46" x="616.25" y="362.250"/></g>
<g fill="#ffca85"><use href="#g100" x="633.75" y="362.250"/><use href="#g101" x="651.25" y="362.250"/><use href="#g108" x="668.75" y="362.250"/><use href="#g97" x="686.25" y="362.250"/><use href="#g121" x="703.75" y="362.250"/></g>
<g fill="#edecee"><use href="#g40" x="721.25" y="362.250"/></g>
<g fill="#61ffca"><use href="#g46" x="738.75" y="362.250"/><use href="#g53" x="756.25" y="362.250"/></g>
<g fill="#edecee"><use href="#g41" x="773.75" y="362.250"/></g>
<g fill="#a277ff"><use href="#g46" x="91.25" y="387.250"/></g>
<g fill="#ffca85"><use href="#g109" x="108.75" y="387.250"/><use href="#g117" x="126.25" y="387.250"/><use href="#g108" x="143.75" y="387.250"/></g>
<g fill="#edecee"><use href="#g40" x="161.25" y="387.250"/></g>
<g fill="#ffca85"><use href="#g115" x="178.75" y="387.250"/><use href="#g112" x="196.25" y="387.250"/><use href="#g101" x="213.75" y="387.250"/><use href="#g101" x="231.25" y="387.250"/><use href="#g100" x="248.75" y="387.250"/></g>
<g fill="#edecee"><use href="#g40" x="266.25" y="387.250"/></g>
<g fill="#a277ff"><use href="#g45" x="283.75" y="387.250"/></g>
<g fill="#61ffca"><use href="#g49" x="301.25" y="387.250"/></g>
<g fill="#edecee"><use href="#g41" x="318.75" y="387.250"/></g>
<g fill="#edecee"><use href="#g41" x="336.25" y="387.250"/></g>
<g fill="#a277ff"><use href="#g46" x="353.75" y="387.250"/></g>
<g fill="#ffca85"><use href="#g104" x="371.25" y="387.250"/><use href="#g112" x="388.75" y="387.250"/><use href="#g102" x="406.25" y="387.250"/></g>
<g fill="#edecee"><use href="#g40" x="423.75" y="387.250"/></g>
<g fill="#61ffca"><use href="#g49" x="441.25" y="387.250"/><use href="#g53" x="458.75" y="387.250"/><use href="#g48" x="476.25" y="387.250"/><use href="#g48" x="493.75" y="387.250"/></g>
<g fill="#edecee"><use href="#g41" x="511.25" y="387.250"/></g>
<g fill="#edecee"><use href="#g41" x="56.25" y="411.250"/></g>
<g fill="#a277ff"><use href="#g46" x="56.25" y="436.250"/></g>
<g fill="#ffca85"><use href="#g115" x="73.75" y="436.250"/><use href="#g116" x="91.25" y="436.250"/><use href="#g97" x="108.75" y="436.250"/><use href="#g99" x="126.25" y="436.250"/><use href="#g107" x="143.75" y="436.250"/></g>
<g fill="#edecee"><use href="#g40" x="161.25" y="436.250"/></g>
<g fill="#ffca85"><use href="#g110" x="91.25" y="460.250"/><use href="#g111" x="108.75" y="460.250"/><use href="#g116" x="126.25" y="460.250"/><use href="#g101" x="143.75" y="460.250"/></g>
<g fill="#edecee"><use href="#g40" x="161.25" y="460.250"/></g>
<g fill="#61ffca"><use href="#g34" x="178.75" y="460.250"/><use href="#g123" x="196.25" y="460.250"/><use href="#g48" x="213.75" y="460.250"/><use href="#g52" x="248.75" y="460.250"/><use href="#g51" x="283.75" y="460.250"/><use href="#g50" x="318.75" y="460.250"/><use href="#g49" x="353.75" y="460.250"/><use href="#g125" x="371.25" y="460.250"/><use href="#g37" x="388.75" y="460.250"/><use href="#g50" x="406.25" y="460.250"/><use href="#g34" x="423.75" y="460.250"/></g>
<g fill="#a277ff"><use href="#g46" x="441.25" y="460.250"/></g>
<g fill="#ffca85"><use href="#g115" x="458.75" y="460.250"/><use href="#g99" x="476.25" y="460.250"/><use href="#g97" x="493.75" y="460.250"/><use href="#g108" x="511.25" y="460.250"/><use href="#g101" x="528.75" y="460.250"/></g>
<g fill="#edecee"><use href="#g40" x="546.25" y="460.250"/></g>
<g fill="#61ffca"><use href="#g39" x="563.75" y="460.250"/><use href="#g67" x="581.25" y="460.250"/><use href="#g52" x="598.75" y="460.250"/><use href="#g109" x="633.75" y="460.250"/><use href="#g105" x="651.25" y="460.250"/><use href="#g110" x="668.75" y="460.250"/><use href="#g111" x="686.25" y="460.250"/><use href="#g114" x="703.75" y="460.250"/><use href="#g39" x="721.25" y="460.250"/></g>
<g fill="#edecee"><use href="#g41" x="738.75" y="460.250"/></g>
<g fill="#edecee"><use href="#g41" x="756.25" y="460.250"/></g>
<g fill="#a277ff"><use href="#g46" x="91.25" y="485.250"/></g>
<g fill="#ffca85"><use href="#g115" x="108.75" y="485.250"/><use href="#g116" x="126.25" y="485.250"/><use href="#g114" x="143.75" y="485.250"/><use href="#g117" x="161.25" y="485.250"/><use href="#g99" x="178.75" y="485.250"/><use href="#g116" x="196.25" y="485.250"/></g>
<g fill="#edecee"><use href="#g40" x="213.75" y="485.250"/></g>
<g fill="#61ffca"><use href="#g34" x="231.25" y="485.250"/><use href="#g120" x="248.75" y="485.250"/><use href="#g64" x="266.25" y="485.250"/><use href="#g53" x="283.75" y="485.250"/><use href="#g120" x="318.75" y="485.250"/><use href="#g64" x="336.25" y="485.250"/><use href="#g51" x="353.75" y="485.250"/><use href="#g120" x="388.75" y="485.250"/><use href="#g64" x="406.25" y="485.250"/><use href="#g50" x="423.75" y="485.250"/><use href="#g34" x="441.25" y="485.250"/></g>
<g fill="#edecee"><use href="#g41" x="458.75" y="485.250"/></g>
<g fill="#a277ff"><use href="#g46" x="476.25" y="485.250"/></g>
<g fill="#ffca85"><use href="#g108" x="493.75" y="485.250"/><use href="#g97" x="511.25" y="485.250"/><use href="#g115" x="528.75" y="485.250"/><use href="#g116" x="546.25" y="485.250"/><use href="#g79" x="563.75" y="485.250"/><use href="#g102" x="581.25" y="485.250"/></g>
<g fill="#edecee"><use href="#g40" x="598.75" y="485.250"/></g>
<g fill="#61ffca"><use href="#g52" x="616.25" y="485.250"/></g>
<g fill="#edecee"><use href="#g44" x="633.75" y="485.250"/></g>
<g fill="#edecee"><use href="#g120" x="668.75" y="485.250"/></g>
<g fill="#edecee"><use href="#g61" x="686.25" y="485.250"/></g>
<g fill="#edecee"><use href="#g62" x="703.75" y="485.250"/></g>
<g fill="#edecee"><use href="#g120" x="721.25" y="485.250"/></g>
<g fill="#a277ff"><use href="#g46" x="738.75" y="485.250"/></g>
<g fill="#ffca85"><use href="#g102" x="756.25" y="485.250"/><use href="#g97" x="773.75" y="485.250"/><use href="#g115" x="791.25" y="485.250"/><use href="#g116" x="808.75" y="485.250"/></g>
<g fill="#edecee"><use href="#g40" x="826.25" y="485.250"/></g>
<g fill="#61ffca"><use href="#g34" x="843.75" y="485.250"/><use href="#g50" x="861.25" y="485.250"/><use href="#g34" x="878.75" y="485.250"/></g>
<g fill="#edecee"><use href="#g41" x="896.25" y="485.250"/></g>
<g fill="#edecee"><use href="#g41" x="913.75" y="485.250"/></g>
<g fill="#a277ff"><use href="#g46" x="91.25" y="509.250"/></g>
<g fill="#ffca85"><use href="#g115" x="108.75" y="509.250"/><use href="#g111" x="126.25" y="509.250"/><use href="#g109" x="143.75" y="509.250"/><use href="#g101" x="161.25" y="509.250"/><use href="#g116" x="178.75" y="509.250"/><use href="#g105" x="196.25" y="509.250"/><use href="#g109" x="213.75" y="509.250"/><use href="#g101" x="231.25" y="509.250"/><use href="#g115" x="248.75" y="509.250"/></g>
<g fill="#edecee"><use href="#g40" x="266.25" y="509.250"/></g>
<g fill="#edecee"><use href="#g120" x="283.75" y="509.250"/></g>
<g fill="#edecee"><use href="#g61" x="301.25" y="509.250"/></g>
<g fill="#edecee"><use href="#g62" x="318.75" y="509.250"/></g>
<g fill="#edecee"><use href="#g120" x="336.25" y="509.250"/></g>
<g fill="#a277ff"><use href="#g46" x="353.75" y="509.250"/></g>
<g fill="#ffca85"><use href="#g97" x="371.25" y="509.250"/><use href="#g100" x="388.75" y="509.250"/><use href="#g100" x="406.25" y="509.250"/></g>
<g fill="#edecee"><use href="#g40" x="423.75" y="509.250"/></g>
<g fill="#ffca85"><use href="#g110" x="441.25" y="509.250"/><use href="#g111" x="458.75" y="509.250"/><use href="#g116" x="476.25" y="509.250"/><use href="#g101" x="493.75" y="509.250"/></g>
<g fill="#edecee"><use href="#g40" x="511.25" y="509.250"/></g>
<g fill="#61ffca"><use href="#g34" x="528.75" y="509.250"/><use href="#g49" x="546.25" y="509.250"/><use href="#g50" x="563.75" y="509.250"/><use href="#g34" x="581.25" y="509.250"/></g>
<g fill="#edecee"><use href="#g41" x="598.75" y="509.250"/></g>
<g fill="#edecee"><use href="#g41" x="616.25" y="509.250"/></g>
<g fill="#edecee"><use href="#g41" x="633.75" y="509.250"/></g>
<g fill="#a277ff"><use href="#g46" x="91.25" y="534.250"/></g>
<g fill="#ffca85"><use href="#g115" x="108.75" y="534.250"/></g>
<g fill="#edecee"><use href="#g40" x="126.25" y="534.250"/></g>
<g fill="#61ffca"><use href="#g39" x="143.75" y="534.250"/><use href="#g115" x="161.25" y="534.250"/><use href="#g97" x="178.75" y="534.250"/><use href="#g119" x="196.25" y="534.250"/><use href="#g116" x="213.75" y="534.250"/><use href="#g111" x="231.25" y="534.250"/><use href="#g111" x="248.75" y="534.250"/><use href="#g116" x="266.25" y="534.250"/><use href="#g104" x="283.75" y="534.250"/><use href="#g39" x="301.25" y="534.250"/></g>
<g fill="#edecee"><use href="#g41" x="318.75" y="534.250"/></g>
<g fill="#a277ff"><use href="#g46" x="91.25" y="558.250"/></g>
<g fill="#ffca85"><use href="#g100" x="108.75" y="558.250"/><use href="#g101" x="126.25" y="558.250"/><use href="#g99" x="143.75" y="558.250"/><use href="#g97" x="161.25" y="558.250"/><use href="#g121" x="178.75" y="558.250"/></g>
<g fill="#edecee"><use href="#g40" x="196.25" y="558.250"/></g>
<g fill="#61ffca"><use href="#g46" x="213.75" y="558.250"/><use href="#g48" x="231.25" y="558.250"/><use href="#g52" x="248.75" y="558.250"/></g>
<g fill="#edecee"><use href="#g41" x="266.25" y="558.250"/></g>
<g fill="#a277ff"><use href="#g46" x="283.75" y="558.250"/></g>
<g fill="#ffca85"><use href="#g115" x="301.25" y="558.250"/><use href="#g117" x="318.75" y="558.250"/><use href="#g115" x="336.25" y="558.250"/><use href="#g116" x="353.75" y="558.250"/><use href="#g97" x="371.25" y="558.250"/><use href="#g105" x="388.75" y="558.250"/><use href="#g110" x="406.25" y="558.250"/></g>
<g fill="#edecee"><use href="#g40" x="423.75" y="558.250"/></g>
<g fill="#61ffca"><use href="#g48" x="441.25" y="558.250"/></g>
<g fill="#edecee"><use href="#g41" x="458.75" y="558.250"/></g>
<g fill="#a277ff"><use href="#g46" x="476.25" y="558.250"/></g>
<g fill="#ffca85"><use href="#g103" x="493.75" y="558.250"/><use href="#g97" x="511.25" y="558.250"/><use href="#g105" x="528.75" y="558.250"/><use href="#g110" x="546.25" y="558.250"/></g>
<g fill="#edecee"><use href="#g40" x="563.75" y="558.250"/></g>
<g fill="#61ffca"><use href="#g46" x="581.25" y="558.250"/><use href="#g56" x="598.75" y="558.250"/></g>
<g fill="#edecee"><use href="#g41" x="616.25" y="558.250"/></g>
<g fill="#a277ff"><use href="#g46" x="91.25" y="583.250"/></g>
<g fill="#ffca85"><use href="#g108" x="108.75" y="583.250"/><use href="#g112" x="126.25" y="583.250"/><use href="#g102" x="143.75" y="583.250"/></g>
<g fill="#edecee"><use href="#g40" x="161.25" y="583.250"/></g>
<g fill="#61ffca"><use href="#g50" x="178.75" y="583.250"/><use href="#g48" x="196.25" y="583.250"/><use href="#g48" x="213.75" y="583.250"/><use href="#g48" x="231.25" y="583.250"/></g>
<g fill="#edecee"><use href="#g41" x="248.75" y="583.250"/></g>
<g fill="#a277ff"><use href="#g46" x="266.25" y="583.250"/></g>
<g fill="#ffca85"><use href="#g108" x="283.75" y="583.250"/><use href="#g112" x="301.25" y="583.250"/><use href="#g113" x="318.75" y="583.250"/></g>
<g fill="#edecee"><use href="#g40" x="336.25" y="583.250"/></g>
<g fill="#61ffca"><use href="#g49" x="353.75" y="583.250"/><use href="#g50" x="371.25" y="583.250"/></g>
<g fill="#edecee"><use href="#g41" x="388.75" y="583.250"/></g>
<g fill="#a277ff"><use href="#g46" x="91.25" y="607.250"/></g>
<g fill="#ffca85"><use href="#g100" x="108.75" y="607.250"/><use href="#g101" x="126.25" y="607.250"/><use href="#g108" x="143.75" y="607.250"/><use href="#g97" x="161.25" y="607.250"/><use href="#g121" x="178.75" y="607.250"/></g>
<g fill="#edecee"><use href="#g40" x="196.25" y="607.250"/></g>
<g fill="#61ffca"><use href="#g46" x="213.75" y="607.250"/><use href="#g50" x="231.25" y="607.250"/></g>
<g fill="#edecee"><use href="#g41" x="248.75" y="607.250"/></g>
<g fill="#a277ff"><use href="#g46" x="266.25" y="607.250"/></g>
<g fill="#ffca85"><use href="#g100" x="283.75" y="607.250"/><use href="#g101" x="301.25" y="607.250"/><use href="#g108" x="318.75" y="607.250"/><use href="#g97" x="336.25" y="607.250"/><use href="#g121" x="353.75" y="607.250"/><use href="#g116" x="371.25" y="607.250"/><use href="#g105" x="388.75" y="607.250"/><use href="#g109" x="406.25" y="607.250"/><use href="#g101" x="423.75" y="607.250"/></g>
<g fill="#edecee"><use href="#g40" x="441.25" y="607.250"/></g>
<g fill="#61ffca"><use href="#g46" x="458.75" y="607.250"/><use href="#g49" x="476.25" y="607.250"/><use href="#g50" x="493.75" y="607.250"/><use href="#g53" x="511.25" y="607.250"/></g>
<g fill="#edecee"><use href="#g41" x="528.75" y="607.250"/></g>
<g fill="#a277ff"><use href="#g46" x="91.25" y="632.250"/></g>
<g fill="#ffca85"><use href="#g112" x="108.75" y="632.250"/><use href="#g97" x="126.25" y="632.250"/><use href="#g110" x="143.75" y="632.250"/></g>
<g fill="#edecee"><use href="#g40" x="161.25" y="632.250"/></g>
<g fill="#61ffca"><use href="#g46" x="178.75" y="632.250"/><use href="#g56" x="196.25" y="632.250"/></g>
<g fill="#edecee"><use href="#g41" x="213.75" y="632.250"/></g>
<g fill="#a277ff"><use href="#g46" x="231.25" y="632.250"/></g>
<g fill="#ffca85"><use href="#g108" x="248.75" y="632.250"/><use href="#g112" x="266.25" y="632.250"/><use href="#g102" x="283.75" y="632.250"/></g>
<g fill="#edecee"><use href="#g40" x="301.25" y="632.250"/></g>
<g fill="#edecee"><use href="#g115" x="318.75" y="632.250"/><use href="#g97" x="336.25" y="632.250"/><use href="#g119" x="353.75" y="632.250"/></g>
<g fill="#a277ff"><use href="#g46" x="371.25" y="632.250"/></g>
<g fill="#ffca85"><use href="#g114" x="388.75" y="632.250"/><use href="#g97" x="406.25" y="632.250"/><use href="#g110" x="423.75" y="632.250"/><use href="#g103" x="441.25" y="632.250"/><use href="#g101" x="458.75" y="632.250"/></g>
<g fill="#edecee"><use href="#g40" x="476.25" y="632.250"/></g>
<g fill="#61ffca"><use href="#g49" x="493.75" y="632.250"/><use href="#g48" x="511.25" y="632.250"/><use href="#g48" x="528.75" y="632.250"/></g>
<g fill="#edecee"><use href="#g44" x="546.25" y="632.250"/></g>
<g fill="#61ffca"><use href="#g56" x="563.75" y="632.250"/><use href="#g48" x="581.25" y="632.250"/><use href="#g48" x="598.75" y="632.250"/><use href="#g48" x="616.25" y="632.250"/></g>
<g fill="#edecee"><use href="#g41" x="633.75" y="632.250"/></g>
<g fill="#a277ff"><use href="#g46" x="651.25" y="632.250"/></g>
<g fill="#ffca85"><use href="#g115" x="668.75" y="632.250"/><use href="#g108" x="686.25" y="632.250"/><use href="#g111" x="703.75" y="632.250"/><use href="#g119" x="721.25" y="632.250"/></g>
<g fill="#edecee"><use href="#g40" x="738.75" y="632.250"/></g>
<g fill="#61ffca"><use href="#g51" x="756.25" y="632.250"/><use href="#g50" x="773.75" y="632.250"/></g>
<g fill="#edecee"><use href="#g41" x="791.25" y="632.250"/></g>
<g fill="#edecee"><use href="#g41" x="808.75" y="632.250"/></g>
<g fill="#a277ff"><use href="#g46" x="91.25" y="656.250"/></g>
<g fill="#ffca85"><use href="#g97" x="108.75" y="656.250"/><use href="#g100" x="126.25" y="656.250"/><use href="#g100" x="143.75" y="656.250"/></g>
<g fill="#edecee"><use href="#g40" x="161.25" y="656.250"/></g>
<g fill="#ffca85"><use href="#g110" x="178.75" y="656.250"/><use href="#g111" x="196.25" y="656.250"/><use href="#g116" x="213.75" y="656.250"/><use href="#g101" x="231.25" y="656.250"/></g>
<g fill="#edecee"><use href="#g40" x="248.75" y="656.250"/></g>
<g fill="#edecee"><use href="#g114" x="266.25" y="656.250"/><use href="#g97" x="283.75" y="656.250"/><use href="#g110" x="301.25" y="656.250"/><use href="#g100" x="318.75" y="656.250"/></g>
<g fill="#a277ff"><use href="#g46" x="336.25" y="656.250"/></g>
<g fill="#ffca85"><use href="#g114" x="353.75" y="656.250"/><use href="#g97" x="371.25" y="656.250"/><use href="#g110" x="388.75" y="656.250"/><use href="#g103" x="406.25" y="656.250"/><use href="#g101" x="423.75" y="656.250"/></g>
<g fill="#edecee"><use href="#g40" x="441.25" y="656.250"/></g>
<g fill="#a277ff"><use href="#g45" x="458.75" y="656.250"/></g>
<g fill="#61ffca"><use href="#g46" x="476.25" y="656.250"/><use href="#g49" x="493.75" y="656.250"/></g>
<g fill="#edecee"><use href="#g44" x="511.25" y="656.250"/></g>
<g fill="#61ffca"><use href="#g46" x="528.75" y="656.250"/><use href="#g49" x="546.25" y="656.250"/></g>
<g fill="#edecee"><use href="#g41" x="563.75" y="656.250"/></g>
<g fill="#edecee"><use href="#g41" x="581.25" y="656.250"/></g>
<g fill="#edecee"><use href="#g41" x="598.75" y="656.250"/></g>
<g fill="#a277ff"><use href="#g46" x="91.25" y="681.250"/></g>
<g fill="#ffca85"><use href="#g114" x="108.75" y="681.250"/><use href="#g101" x="126.25" y="681.250"/><use href="#g115" x="143.75" y="681.250"/><use href="#g101" x="161.25" y="681.250"/><use href="#g116" x="178.75" y="681.250"/></g>
<g fill="#edecee"><use href="#g40" x="196.25" y="681.250"/></g>
<g fill="#61ffca"><use href="#g34" x="213.75" y="681.250"/><use href="#g60" x="231.25" y="681.250"/><use href="#g120" x="248.75" y="681.250"/><use href="#g64" x="266.25" y="681.250"/><use href="#g55" x="283.75" y="681.250"/><use href="#g120" x="318.75" y="681.250"/><use href="#g40" x="336.25" y="681.250"/><use href="#g60" x="353.75" y="681.250"/><use href="#g51" x="371.25" y="681.250"/><use href="#g53" x="406.25" y="681.250"/><use href="#g62" x="423.75" y="681.250"/><use href="#g44" x="441.25" y="681.250"/><use href="#g56" x="458.75" y="681.250"/><use href="#g41" x="476.25" y="681.250"/><use href="#g62" x="493.75" y="681.250"/><use href="#g34" x="511.25" y="681.250"/></g>
<g fill="#edecee"><use href="#g41" x="528.75" y="681.250"/></g>
<g fill="#edecee"><use href="#g41" x="56.25" y="705.250"/></g>
<g fill="#a277ff"><use href="#g46" x="56.25" y="730.250"/></g>
<g fill="#ffca85"><use href="#g115" x="73.75" y="730.250"/><use href="#g116" x="91.25" y="730.250"/><use href="#g97" x="108.75" y="730.250"/><use href="#g99" x="126.25" y="730.250"/><use href="#g107" x="143.75" y="730.250"/></g>
<g fill="#edecee"><use href="#g40" x="161.25" y="730.250"/></g>
<g fill="#ffca85"><use href="#g110" x="91.25" y="754.250"/><use href="#g111" x="108.75" y="754.250"/><use href="#g116" x="126.25" y="754.250"/><use href="#g101" x="143.75" y="754.250"/></g>
<g fill="#edecee"><use href="#g40" x="161.25" y="754.250"/></g>
<g fill="#61ffca"><use href="#g34" x="178.75" y="754.250"/><use href="#g60" x="196.25" y="754.250"/><use href="#g91" x="213.75" y="754.250"/><use href="#g99" x="231.25" y="754.250"/><use href="#g50" x="248.75" y="754.250"/><use href="#g126" x="283.75" y="754.250"/><use href="#g93" x="301.25" y="754.250"/><use href="#g103" x="336.25" y="754.250"/><use href="#g50" x="353.75" y="754.250"/><use href="#g40" x="371.25" y="754.250"/><use href="#g51" x="388.75" y="754.250"/><use href="#g44" x="406.25" y="754.250"/><use href="#g53" x="423.75" y="754.250"/><use href="#g41" x="441.25" y="754.250"/><use href="#g62" x="458.75" y="754.250"/><use href="#g34" x="476.25" y="754.250"/></g>
<g fill="#edecee"><use href="#g41" x="493.75" y="754.250"/></g>
<g fill="#a277ff"><use href="#g46" x="511.25" y="754.250"/></g>
<g fill="#ffca85"><use href="#g115" x="528.75" y="754.250"/></g>
<g fill="#edecee"><use href="#g40" x="546.25" y="754.250"/></g>
<g fill="#61ffca"><use href="#g39" x="563.75" y="754.250"/><use href="#g106" x="581.25" y="754.250"/><use href="#g97" x="598.75" y="754.250"/><use href="#g122" x="616.25" y="754.250"/><use href="#g122" x="633.75" y="754.250"/><use href="#g98" x="651.25" y="754.250"/><use href="#g97" x="668.75" y="754.250"/><use href="#g115" x="686.25" y="754.250"/><use href="#g115" x="703.75" y="754.250"/><use href="#g39" x="721.25" y="754.250"/></g>
<g fill="#edecee"><use href="#g41" x="738.75" y="754.250"/></g>
<g fill="#a277ff"><use href="#g46" x="756.25" y="754.250"/></g>
<g fill="#ffca85"><use href="#g99" x="773.75" y="754.250"/><use href="#g108" x="791.25" y="754.250"/><use href="#g105" x="808.75" y="754.250"/><use href="#g112" x="826.25" y="754.250"/></g>
<g fill="#edecee"><use href="#g40" x="843.75" y="754.250"/></g>
<g fill="#61ffca"><use href="#g49" x="861.25" y="754.250"/></g>
<g fill="#edecee"><use href="#g41" x="878.75" y="754.250"/></g>
<g fill="#a277ff"><use href="#g46" x="896.25" y="754.250"/></g>
<g fill="#ffca85"><use href="#g114" x="913.75" y="754.250"/><use href="#g101" x="931.25" y="754.250"/><use href="#g108" x="948.75" y="754.250"/><use href="#g101" x="966.25" y="754.250"/><use href="#g97" x="983.75" y="754.250"/><use href="#g115" x="1001.25" y="754.250"/><use href="#g101" x="1018.75" y="754.250"/></g>
<g fill="#edecee"><use href="#g40" x="1036.25" y="754.250"/></g>
<g fill="#61ffca"><use href="#g46" x="1053.75" y="754.250"/><use href="#g49" x="1071.25" y="754.250"/></g>
<g fill="#edecee"><use href="#g41" x="1088.75" y="754.250"/></g>
<g fill="#a277ff"><use href="#g46" x="91.25" y="779.250"/></g>
<g fill="#ffca85"><use href="#g100" x="108.75" y="779.250"/><use href="#g101" x="126.25" y="779.250"/><use href="#g99" x="143.75" y="779.250"/><use href="#g97" x="161.25" y="779.250"/><use href="#g121" x="178.75" y="779.250"/></g>
<g fill="#edecee"><use href="#g40" x="196.25" y="779.250"/></g>
<g fill="#61ffca"><use href="#g34" x="213.75" y="779.250"/><use href="#g60" x="231.25" y="779.250"/><use href="#g46" x="248.75" y="779.250"/><use href="#g56" x="266.25" y="779.250"/><use href="#g46" x="301.25" y="779.250"/><use href="#g50" x="318.75" y="779.250"/><use href="#g62" x="336.25" y="779.250"/><use href="#g34" x="353.75" y="779.250"/></g>
<g fill="#edecee"><use href="#g41" x="371.25" y="779.250"/></g>
<g fill="#a277ff"><use href="#g46" x="388.75" y="779.250"/></g>
<g fill="#ffca85"><use href="#g115" x="406.25" y="779.250"/><use href="#g117" x="423.75" y="779.250"/><use href="#g115" x="441.25" y="779.250"/><use href="#g116" x="458.75" y="779.250"/><use href="#g97" x="476.25" y="779.250"/><use href="#g105" x="493.75" y="779.250"/><use href="#g110" x="511.25" y="779.250"/></g>
<g fill="#edecee"><use href="#g40" x="528.75" y="779.250"/></g>
<g fill="#61ffca"><use href="#g48" x="546.25" y="779.250"/></g>
<g fill="#edecee"><use href="#g41" x="563.75" y="779.250"/></g>
<g fill="#a277ff"><use href="#g46" x="91.25" y="803.250"/></g>
<g fill="#ffca85"><use href="#g115" x="108.75" y="803.250"/><use href="#g104" x="126.25" y="803.250"/><use href="#g97" x="143.75" y="803.250"/><use href="#g112" x="161.25" y="803.250"/><use href="#g101" x="178.75" y="803.250"/></g>
<g fill="#edecee"><use href="#g40" x="196.25" y="803.250"/></g>
<g fill="#61ffca"><use href="#g46" x="213.75" y="803.250"/><use href="#g53" x="231.25" y="803.250"/></g>
<g fill="#edecee"><use href="#g41" x="248.75" y="803.250"/></g>
<g fill="#a277ff"><use href="#g46" x="266.25" y="803.250"/></g>
<g fill="#ffca85"><use href="#g97" x="283.75" y="803.250"/><use href="#g100" x="301.25" y="803.250"/><use href="#g100" x="318.75" y="803.250"/></g>
<g fill="#edecee"><use href="#g40" x="336.25" y="803.250"/></g>
<g fill="#ffca85"><use href="#g110" x="353.75" y="803.250"/><use href="#g111" x="371.25" y="803.250"/><use href="#g116" x="388.75" y="803.250"/><use href="#g101" x="406.25" y="803.250"/></g>
<g fill="#edecee"><use href="#g40" x="423.75" y="803.250"/></g>
<g fill="#61ffca"><use href="#g46" x="441.25" y="803.250"/><use href="#g51" x="458.75" y="803.250"/></g>
<g fill="#edecee"><use href="#g41" x="476.25" y="803.250"/></g>
<g fill="#edecee"><use href="#g41" x="493.75" y="803.250"/></g>
<g fill="#edecee"><use href="#g41" x="56.25" y="828.250"/></g>
<g fill="#a277ff"><use href="#g46" x="56.25" y="852.250"/></g>
<g fill="#ffca85"><use href="#g115" x="73.75" y="852.250"/><use href="#g116" x="91.25" y="852.250"/><use href="#g97" x="108.75" y="852.250"/><use href="#g99" x="126.25" y="852.250"/><use href="#g107" x="143.75" y="852.250"/></g>
<g fill="#edecee"><use href="#g40" x="161.25" y="852.250"/></g>
<rect x="73" y="116" width="194" height="20" fill="none" stroke="#ffffff" stroke-width="2"/><rect x="283" y="116" width="19" height="20" fill="none" stroke="#ffffff" stroke-width="2"/><rect x="475" y="141" width="20" height="20" fill="none" stroke="#ffffff" stroke-width="2"/><rect x="563" y="141" width="19" height="20" fill="none" stroke="#ffffff" stroke-width="2"/><rect x="213" y="214" width="19" height="20" fill="none" stroke="#ffffff" stroke-width="2"/><rect x="178" y="312" width="89" height="20" fill="none" stroke="#ffffff" stroke-width="2"/><rect x="458" y="312" width="37" height="20" fill="none" stroke="#ffffff" stroke-width="2"/><rect x="248" y="459" width="19" height="20" fill="none" stroke="#ffffff" stroke-width="2"/><rect x="405" y="459" width="20" height="20" fill="none" stroke="#ffffff" stroke-width="2"/><rect x="248" y="484" width="19" height="20" fill="none" stroke="#ffffff" stroke-width="2"/><rect x="860" y="484" width="20" height="20" fill="none" stroke="#ffffff" stroke-width="2"/><rect x="545" y="508" width="37" height="20" fill="none" stroke="#ffffff" stroke-width="2"/><rect x="248" y="680" width="19" height="20" fill="none" stroke="#ffffff" stroke-width="2"/><rect x="335" y="753" width="37" height="20" fill="none" stroke="#ffffff" stroke-width="2"/><rect x="388" y="753" width="19" height="20" fill="none" stroke="#ffffff" stroke-width="2"/><rect x="423" y="753" width="19" height="20" fill="none" stroke="#ffffff" stroke-width="2"/><rect x="300" y="778" width="37" height="20" fill="none" stroke="#ffffff" stroke-width="2"/><rect x="511" y="215.00" width="1.2" height="18" fill="#a277ff"/></svg></div></div>
<div class="abs" id="vs"></div>
<div class="abs" id="vthumb"></div>
<div class="abs" id="hs"></div>
<div class="abs" id="hthumb"></div>
<div class="abs" id="corner"></div>
<svg class="abs" style="left:0;top:0" width="1143" height="877"><path fill="#505050" d="M1122.8 101 L1131.2 101 L1127 96.6 Z M1122.8 845 L1131.2 845 L1127 849.4 Z M1107 862 L1107 870.4 L1111.3 866.2 Z"/><path fill="#a3a3a3" d="M15.3 862 L15.3 870.4 L11 866.2 Z"/></svg>
</body></html>
